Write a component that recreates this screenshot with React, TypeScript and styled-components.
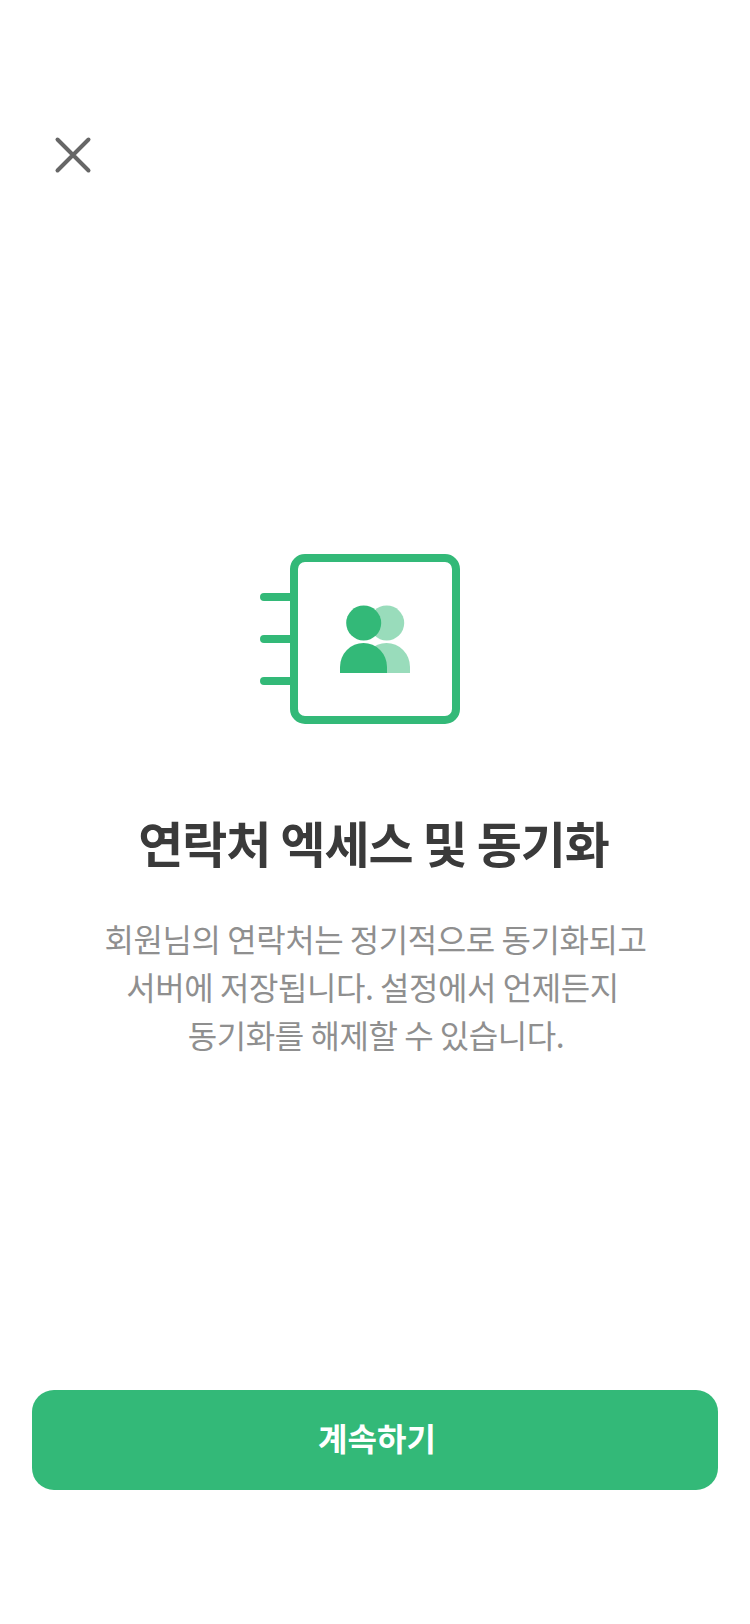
import React from "react";
import styled, { createGlobalStyle } from "styled-components";

const Global = createGlobalStyle`
  html, body { margin: 0; padding: 0; background: #fff; }
  * { box-sizing: border-box; }
`;

const Screen = styled.div`
  width: 750px;
  height: 1624px;
  display: flex;
  flex-direction: column;
  background: #fff;
  font-family: "Noto Sans CJK KR", "Noto Sans", sans-serif;
`;

const TopBar = styled.header`
  height: 171px;
  padding: 136px 0 0 54px;
  flex: none;
`;

const CloseButton = styled.button`
  display: block;
  width: 38px;
  height: 38px;
  padding: 0;
  border: 0;
  background: none;
`;

const Main = styled.main`
  flex: 1;
  display: flex;
  flex-direction: column;
  align-items: center;
  padding-top: 383px;
`;

const Illustration = styled.svg`
  display: block;
  width: 200px;
  height: 170px;
  margin-left: -30px;
`;

const Title = styled.h1`
  margin: 83px 3px 0 0;
  font-size: 49px;
  line-height: 70px;
  font-weight: 700;
  letter-spacing: -1.05px;
  color: #3a3a3a;
  text-align: center;
`;

const Description = styled.p`
  margin: 37px 0 0;
  font-size: 32px;
  line-height: 48px;
  font-weight: 400;
  letter-spacing: -0.44px;
  color: #8f8f8f;
  text-align: center;
`;

const Line = styled.span<{ $nudge?: number }>`
  display: block;
  padding-left: ${(p) => Math.max(p.$nudge ?? 0, 0)}px;
  padding-right: ${(p) => Math.max(-(p.$nudge ?? 0), 0)}px;
`;

const Footer = styled.footer`
  flex: none;
  padding: 0 32px 134px;
`;

const PrimaryButton = styled.button`
  display: block;
  width: 100%;
  height: 100px;
  padding: 0 0 6px 4px;
  border: 0;
  border-radius: 22px;
  background: #33b978;
  color: #fff;
  font-family: inherit;
  font-size: 32px;
  font-weight: 700;
`;

export default function App() {
  return (
    <Screen>
      <Global />
      <TopBar>
        <CloseButton aria-label="닫기">
          <svg width="38" height="38" viewBox="0 0 38 38" fill="none" stroke="#666" strokeWidth="4" strokeLinecap="round">
            <path d="M3.500 3.500 L34.500 34.500 M34.500 3.500 L3.500 34.500" />
          </svg>
        </CloseButton>
      </TopBar>
      <Main>
        <Illustration viewBox="0 0 200 170" fill="none">
          <g stroke="#33b978" strokeWidth="8" strokeLinecap="round">
            <path d="M4 43 H34 M4 85 H34 M4 127 H34" />
          </g>
          <rect x="34" y="4" width="162" height="162" rx="11" stroke="#33b978" strokeWidth="8" fill="#fff" />
          <g fill="#33b978" fillOpacity="0.5">
            <circle cx="126.700" cy="69" r="17.500" />
            <path d="M103 119 V113 A23.500 24 0 0 1 150 113 V119 Z" />
          </g>
          <circle cx="103.700" cy="69" r="17.500" fill="#33b978" />
          <path d="M80 119 V113 A23.500 24 0 0 1 127 113 V119 Z" fill="#33b978" />
        </Illustration>
        <Title>연락처 엑세스 및 동기화</Title>
        <Description>
          <Line $nudge={1}>회원님의 연락처는 정기적으로 동기화되고</Line>
          <Line $nudge={-5}>서버에 저장됩니다. 설정에서 언제든지</Line>
          <Line $nudge={2}>동기화를 해제할 수 있습니다.</Line>
        </Description>
      </Main>
      <Footer>
        <PrimaryButton>계속하기</PrimaryButton>
      </Footer>
    </Screen>
  );
}
